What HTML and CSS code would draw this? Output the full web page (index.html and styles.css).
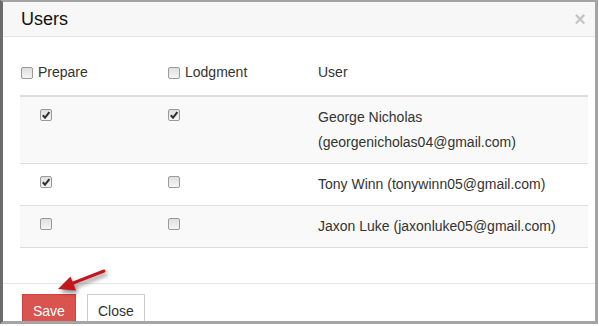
FILE: index.html
```html
<!DOCTYPE html>
<html lang="en">
<head>
  <meta charset="UTF-8" />
  <title>Users</title>
  <link rel="stylesheet" href="styles.css">
</head>
<body>
  <div class="modal">
    <div class="modal-header">
      <h4 class="modal-title">Users</h4>
      <button class="close">&times;</button>
    </div>

    <div class="modal-body">
      <table class="users">
        <colgroup>
          <col class="col-prepare">
          <col class="col-lodgment">
          <col>
        </colgroup>
        <thead>
          <tr>
            <th><label><input type="checkbox" class="cb head-first"> Prepare</label></th>
            <th><label><input type="checkbox" class="cb"> Lodgment</label></th>
            <th>User</th>
          </tr>
        </thead>
        <tbody>
          <tr class="odd">
            <td><input type="checkbox" class="cb first" checked></td>
            <td><input type="checkbox" class="cb" checked></td>
            <td>George Nicholas<br>(georgenicholas04@gmail.com)</td>
          </tr>
          <tr>
            <td><input type="checkbox" class="cb first" checked></td>
            <td><input type="checkbox" class="cb"></td>
            <td>Tony Winn (tonywinn05@gmail.com)</td>
          </tr>
          <tr class="odd">
            <td><input type="checkbox" class="cb first"></td>
            <td><input type="checkbox" class="cb"></td>
            <td>Jaxon Luke (jaxonluke05@gmail.com)</td>
          </tr>
        </tbody>
      </table>
    </div>

    <div class="modal-footer">
      <button class="btn btn-danger">Save</button>
      <button class="btn btn-default">Close</button>
    </div>

    <!-- pointer arrow drawn over the footer -->
    <svg class="arrow" width="60" height="36" viewBox="0 0 60 36">
      <line x1="22" y1="21.5" x2="54" y2="9" stroke="#c4161c" stroke-width="3" stroke-linecap="round"/>
      <polygon points="8,27 20.5,14.5 26,28.5" fill="#c4161c"/>
    </svg>
  </div>
</body>
</html>
```

FILE: styles.css
```css
body {
  margin: 0;
  padding: 0;
  background: #fff;
  font-family: "Liberation Sans", Arial, sans-serif;
  font-size: 14px;
  color: #333;
}

.modal {
  position: relative;
  box-sizing: border-box;
  width: 598px;
  height: 324px;
  overflow: hidden;
  background: #fff;
  border: 3px solid #a4a4a4;
  border-top-width: 2px;
  border-left-color: #6b6b6b;
}

.modal-header {
  display: flex;
  justify-content: space-between;
  align-items: flex-start;
  height: 35px;
  box-sizing: border-box;
  padding: 7px 9px 0 18px;
  background: #f7f7f7;
  border-bottom: 1px solid #e5e5e5;
}

.modal-title {
  margin: 0;
  font-size: 18px;
  line-height: 20px;
  font-weight: normal;
  color: #111;
}

.close {
  padding: 0;
  margin: 0;
  background: none;
  border: none;
  font-family: "Liberation Sans", Arial, sans-serif;
  font-size: 20px;
  font-weight: bold;
  line-height: 20px;
  color: #000;
  opacity: 0.2;
}

.modal-body {
  padding: 15px 7px 35px 17px;
}

.users {
  width: 100%;
  border-collapse: collapse;
  border-spacing: 0;
}

.col-prepare { width: 140px; }
.col-lodgment { width: 150px; }

.users th,
.users td {
  padding: 8px;
  line-height: 25px;
  text-align: left;
  vertical-align: top;
}

.users th {
  font-weight: normal;
  border-bottom: 2px solid #ddd;
}

.users td {
  border-bottom: 1px solid #ddd;
}

.users tr.odd td {
  background: #f9f9f9;
}

.users label {
  display: inline-flex;
  align-items: center;
  gap: 5px;
}

.cb {
  appearance: none;
  -webkit-appearance: none;
  display: inline-block;
  box-sizing: border-box;
  width: 12px;
  height: 12px;
  margin: 4px 0 0;
  vertical-align: top;
  border: 1px solid #9a9a9a;
  border-radius: 2px;
  background: linear-gradient(#dedede, #f6f6f6);
}

.users label .cb {
  margin-top: 1px;
}

.cb:checked {
  background: url("data:image/svg+xml,%3Csvg xmlns='http://www.w3.org/2000/svg' width='10' height='10'%3E%3Cpath d='M1.8 5.2 L4 7.6 L8.4 2.2' fill='none' stroke='%23303030' stroke-width='2'/%3E%3C/svg%3E") center no-repeat, linear-gradient(#dedede, #f6f6f6);
}

.cb.head-first {
  margin-left: -7px;
}

.cb.first {
  margin-left: 12px;
}

.modal-footer {
  display: flex;
  gap: 11px;
  padding: 10px 19px;
  border-top: 1px solid #e5e5e5;
}

.btn {
  padding: 6px 10px;
  font-family: "Liberation Sans", Arial, sans-serif;
  font-size: 14px;
  line-height: 20px;
  border: 1px solid transparent;
  border-radius: 0;
}

.btn-danger {
  background: #d9534f;
  border-color: #d43f3a;
  color: #fff;
}

.btn-default {
  background: #fff;
  border-color: #ccc;
  color: #333;
}

.arrow {
  position: absolute;
  left: 47px;
  top: 260px;
  filter: drop-shadow(2px 3px 2px rgba(0, 0, 0, 0.45));
}
```
